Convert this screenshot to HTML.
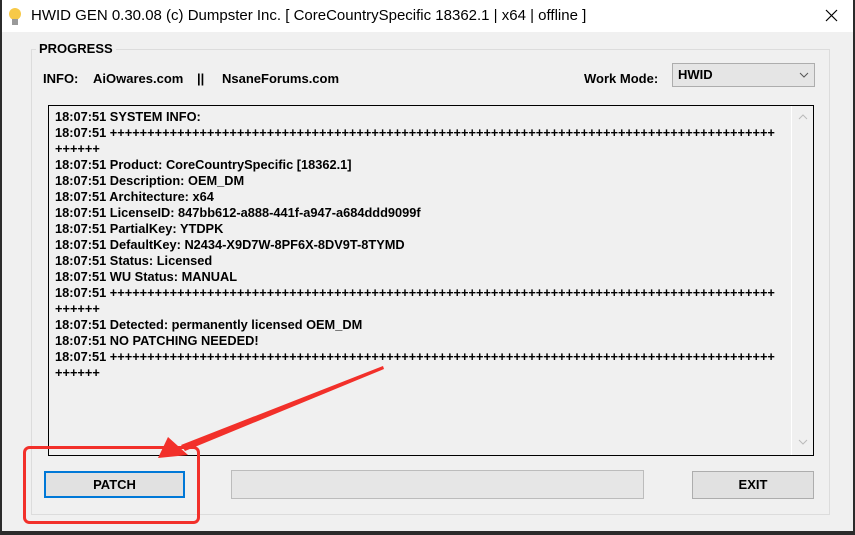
<!DOCTYPE html>
<html><head><meta charset="utf-8"><style>
*{margin:0;padding:0;box-sizing:border-box}
body{width:855px;height:535px;background:#2b2b2b;position:relative;overflow:hidden;font-family:"Liberation Sans",Arial,sans-serif}
#win{position:absolute;left:2px;top:0;width:851px;height:531px;background:#f0f0f0}
#title{position:absolute;left:0;top:0;width:851px;height:32px;background:#fff;font-size:15px;color:#000}
#title .t{position:absolute;left:29px;top:7px;white-space:nowrap}
.ab{position:absolute}
#grp{position:absolute;left:29px;top:49px;width:799px;height:466px;border:1px solid #dcdcdc}
.b{font-weight:bold;font-size:13px;color:#000;white-space:nowrap}
#log{position:absolute;left:46px;top:105px;width:766px;height:351px;border:1px solid #000;background:#f0f0f0}
#log pre{position:absolute;left:6px;top:3px;font-family:"Liberation Sans",Arial,sans-serif;font-weight:bold;font-size:12.8px;line-height:16px;color:#000}
#sb{position:absolute;right:0;top:0;width:22px;height:349px;border-left:1px solid #fff}
.btn{position:absolute;border:1px solid #adadad;background:#e1e1e1;font-weight:bold;font-size:13px;text-align:center;line-height:26px}
</style></head><body>
<div id="win">
<div id="title">
<svg class="ab" style="left:6px;top:7px" width="14" height="20" viewBox="0 0 14 20"><circle cx="7" cy="7" r="6" fill="#f7c948"/><rect x="4" y="12" width="6" height="6" fill="#999"/></svg>
<span class="t">HWID GEN 0.30.08 (c) Dumpster Inc. [ CoreCountrySpecific 18362.1 | x64 | offline ]</span>
<svg class="ab" style="left:823px;top:9px" width="13" height="13"><path d="M1 1L12 12M12 1L1 12" stroke="#000" stroke-width="1.2"/></svg>
</div>
<div id="grp"></div>
<div class="ab b" style="left:34px;top:41px;background:#f0f0f0;padding:0 3px">PROGRESS</div>
<div class="ab b" style="left:41px;top:71px">INFO:</div>
<div class="ab b" style="left:91px;top:71px">AiOwares.com</div>
<div class="ab b" style="left:195px;top:71px">||</div>
<div class="ab b" style="left:220px;top:71px">NsaneForums.com</div>
<div class="ab b" style="left:582px;top:71px">Work Mode:</div>
<div class="ab" style="left:670px;top:63px;width:143px;height:24px;border:1px solid #adadad;background:#e5e5e5">
<span class="b ab" style="left:5px;top:3px">HWID</span>
<svg class="ab" style="right:5px;top:8px" width="10" height="6"><path d="M1 1L5 5L9 1" stroke="#555" fill="none"/></svg></div>
<div id="log"><pre>18:07:51 SYSTEM INFO:
18:07:51 +++++++++++++++++++++++++++++++++++++++++++++++++++++++++++++++++++++++++++++++++++++++++
++++++
18:07:51 Product: CoreCountrySpecific [18362.1]
18:07:51 Description: OEM_DM
18:07:51 Architecture: x64
18:07:51 LicenseID: 847bb612-a888-441f-a947-a684ddd9099f
18:07:51 PartialKey: YTDPK
18:07:51 DefaultKey: N2434-X9D7W-8PF6X-8DV9T-8TYMD
18:07:51 Status: Licensed
18:07:51 WU Status: MANUAL
18:07:51 +++++++++++++++++++++++++++++++++++++++++++++++++++++++++++++++++++++++++++++++++++++++++
++++++
18:07:51 Detected: permanently licensed OEM_DM
18:07:51 NO PATCHING NEEDED!
18:07:51 +++++++++++++++++++++++++++++++++++++++++++++++++++++++++++++++++++++++++++++++++++++++++
++++++</pre>
<div id="sb"><svg class="ab" style="left:6px;top:8px" width="10" height="6"><path d="M1 5L5 1L9 5" stroke="#bbb" fill="none"/></svg>
<svg class="ab" style="left:6px;top:333px" width="10" height="6"><path d="M1 1L5 5L9 1" stroke="#bbb" fill="none"/></svg></div>
</div>
<div class="btn" style="left:42px;top:471px;width:141px;height:27px;border:2px solid #0078d7;line-height:23px">PATCH</div>
<div class="ab" style="left:229px;top:470px;width:413px;height:29px;border:1px solid #bcbcbc;background:#e6e6e6"></div>
<div class="btn" style="left:690px;top:471px;width:122px;height:28px">EXIT</div>
</div>
<svg class="ab" style="left:0;top:0" width="855" height="535">
<rect x="24.5" y="447.5" width="174" height="75" rx="5" fill="none" stroke="#f2302a" stroke-width="3"/>
<path d="M383 366L384 369L185 451L181 445Z" fill="#f2302a"/>
<path d="M158 458L168 437L188 455Z" fill="#f2302a"/>
</svg>
</body></html>
